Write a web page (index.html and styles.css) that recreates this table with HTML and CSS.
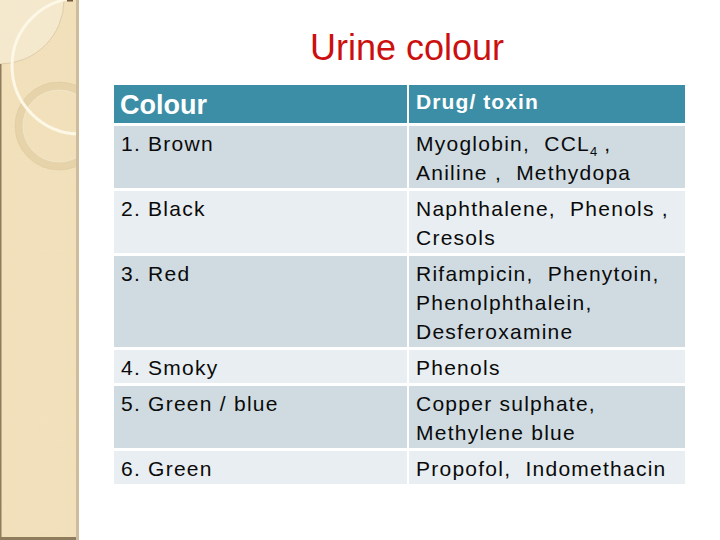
FILE: index.html
```html
<!DOCTYPE html>
<html>
<head>
<meta charset="utf-8">
<link rel="stylesheet" href="styles.css">
</head>
<body>
<div class="slide">
  <svg class="sidebar" width="79" height="540" viewBox="0 0 79 540" xmlns="http://www.w3.org/2000/svg">
    <defs>
      <pattern id="chk" width="3" height="3" patternUnits="userSpaceOnUse" patternTransform="rotate(45)">
        <rect width="1.5" height="1.5" fill="#f4e5c5"/>
        <rect x="1.5" y="1.5" width="1.5" height="1.5" fill="#f4e5c5"/>
      </pattern>
    </defs>
    <rect width="79" height="540" fill="#f0deb6"/>
    <rect width="79" height="540" fill="url(#chk)" opacity="0.6"/>
    <path d="M0,0 L64,0 A64,64 0 0 1 0,64 Z" fill="#f5ead2" opacity="0.8"/>
    <path d="M64,0 A64,64 0 0 1 0,64" fill="none" stroke="#d9c6a0" stroke-width="0.8"/>
    <circle cx="59" cy="126" r="40" fill="none" stroke="#e6d3aa" stroke-width="8"/>
    <circle cx="59" cy="126" r="44" fill="none" stroke="#d8c39a" stroke-width="0.6" opacity="0.7"/>
    <circle cx="59" cy="126" r="36" fill="none" stroke="#f3e7cc" stroke-width="0.8"/>
    <circle cx="80" cy="66" r="68" fill="none" stroke="#fdf7e6" stroke-width="3"/>
    <rect x="0" y="64" width="1.5" height="476" fill="#8f7c5c"/>
    <rect x="0" y="537" width="79" height="3" fill="#8f7c5c"/>
    <rect x="76" y="0" width="3" height="540" fill="#cdbd9c"/>
    <rect x="67" y="0" width="6" height="1.5" fill="#6f5a3a"/>
  </svg>
  <div class="main">
    <h1 class="title">Urine colour</h1>
    <div class="table">
      <div class="hcell hc1">Colour</div>
      <div class="hcell hc2">Drug/ toxin</div>

      <div class="cell dark">1. Brown</div>
      <div class="cell dark">Myoglobin,&nbsp; CCL<span class="sub">4</span> ,<br>Aniline ,&nbsp; Methydopa</div>

      <div class="cell light">2. Black</div>
      <div class="cell light">Naphthalene,&nbsp; Phenols ,<br>Cresols</div>

      <div class="cell dark">3. Red</div>
      <div class="cell dark">Rifampicin,&nbsp; Phenytoin,<br>Phenolphthalein,<br>Desferoxamine</div>

      <div class="cell light">4. Smoky</div>
      <div class="cell light">Phenols</div>

      <div class="cell dark">5. Green / blue</div>
      <div class="cell dark">Copper sulphate,<br>Methylene blue</div>

      <div class="cell light">6. Green</div>
      <div class="cell light">Propofol,&nbsp; Indomethacin</div>
    </div>
  </div>
</div>
</body>
</html>
```

FILE: styles.css
```css
html, body {
  margin: 0;
  padding: 0;
  background: #ffffff;
}
body {
  width: 720px;
  height: 540px;
  overflow: hidden;
  font-family: "Liberation Sans", Arial, sans-serif;
}
.slide {
  display: flex;
  width: 720px;
  height: 540px;
}
.sidebar {
  display: block;
  flex: 0 0 79px;
}
.main {
  padding-left: 35px;
  padding-top: 28px;
}
.title {
  margin: 0;
  width: 586px;
  text-align: center;
  font-weight: normal;
  font-size: 36px;
  line-height: 40px;
  color: #cc1010;
}
.table {
  margin-top: 17px;
  display: grid;
  grid-template-columns: 293px 276px;
  column-gap: 2px;
  row-gap: 3px;
}
.hcell {
  background: #3b8ea6;
  color: #ffffff;
  font-weight: bold;
  height: 38px;
  padding-left: 7px;
  box-sizing: border-box;
  white-space: nowrap;
}
.hc1 {
  font-size: 27px;
  line-height: 40px;
  padding-left: 6px;
}
.hc2 {
  font-size: 21px;
  line-height: 34px;
  letter-spacing: 1.1px;
}
.cell {
  font-size: 21px;
  line-height: 29px;
  letter-spacing: 1.25px;
  color: #0a0a0a;
  padding: 3px 0 1px 7px;
  white-space: nowrap;
}
.dark {
  background: #cfdbe1;
}
.light {
  background: #e8eef1;
}
.sub {
  font-size: 13px;
  line-height: 0;
  position: relative;
  top: 5px;
  letter-spacing: 0;
}
```
